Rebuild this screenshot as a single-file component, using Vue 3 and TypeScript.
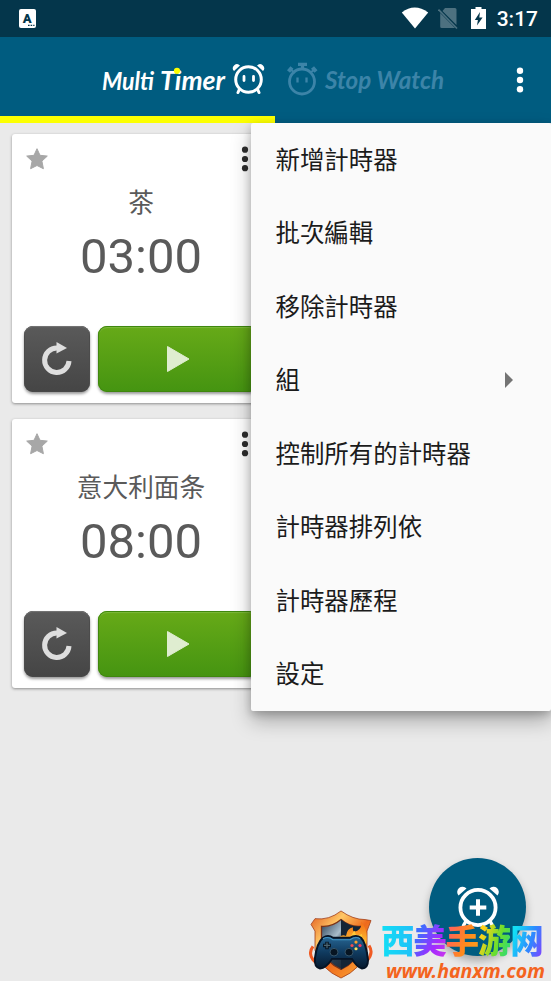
<script setup lang="ts">
interface Timer {
  name: string
  time: string
}
interface MenuItem {
  label: string
  submenu?: boolean
}

const timers: Timer[] = [
  { name: '茶', time: '03:00' },
  { name: '意大利面条', time: '08:00' },
]

const menu: MenuItem[] = [
  { label: '新增計時器' },
  { label: '批次編輯' },
  { label: '移除計時器' },
  { label: '組', submenu: true },
  { label: '控制所有的計時器' },
  { label: '計時器排列依' },
  { label: '計時器歷程' },
  { label: '設定' },
]
</script>

<template>
  <div class="screen">
    <header class="status">
      <svg class="ime" width="17" height="19" viewBox="0 0 17 19">
        <rect width="17" height="19" rx="2" fill="#fff" />
        <text x="8.3" y="13.500" text-anchor="middle" class="ime-letter">A</text>
        <path d="M9 16.3h1.6M11.6 16.3h1.6M14.2 16.3h1.3" stroke="#04364b" stroke-width="1.3" />
      </svg>
      <div class="status-right">
        <svg width="28" height="22" viewBox="0 0 28 22">
          <path d="M.8 5.4Q13.5-4.2 27.2 5.4L14 21.500Z" fill="#fff" />
        </svg>
        <svg class="sim" width="20" height="23" viewBox="0 0 20 23">
          <path d="M7 1h10a1.5 1.5 0 0 1 1.5 1.5V18L4.5 4Z M2.2 6 17 21H3.700a1.500 1.500 0 0 1-1.500-1.500Z" fill="#4d7180" />
          <path d="M.5 2.500 19 21.500" stroke="#4d7180" stroke-width="1.600" />
        </svg>
        <svg class="battery" width="15" height="22" viewBox="0 0 15 22">
          <path d="M4.500 0h6v2H15v20H0V2h4.500Z" fill="#fff" />
          <path d="M9 5 3.800 13h3.100L6 18.500 11.600 10.500H8.300Z" fill="#04364b" />
        </svg>
        <span class="clock">3:17</span>
      </div>
    </header>

    <nav class="tabs">
      <div class="tab tab-active">
        <svg width="164" height="40" viewBox="0 0 164 40">
          <g class="word" fill="#fff">
            <text x="1" y="30" font-size="24" textLength="52" lengthAdjust="spacingAndGlyphs">Multi</text>
            <text x="59" y="30" font-size="26.500" textLength="65" lengthAdjust="spacingAndGlyphs">Timer</text>
          </g>
          <circle cx="76" cy="10.800" r="3.100" fill="#fcff00" />
          <g fill="none" stroke="#fff" stroke-linecap="round">
            <circle cx="147.500" cy="19.500" r="12.800" stroke-width="3" />
            <path d="M143 16.500v4M152.500 16.500v4" stroke-width="2.800" />
            <path d="M138.300 29.500l-1.300 3M156.700 29.500l1.300 3" stroke-width="3" />
          </g>
          <path d="M133 11a4 4 0 0 1 6-5.500Z M162 11a4 4 0 0 0-6-5.500Z" fill="#fff" />
        </svg>
      </div>
      <div class="tab">
        <svg width="160" height="40" viewBox="0 0 160 40">
          <g fill="none" stroke="#3c84a8">
            <circle cx="15" cy="21.500" r="12.500" stroke-width="2.800" />
            <path d="M10.500 17.500v5M19.500 17.500v5" stroke-width="2.300" />
            <path d="M15.500 9V4M11 4.400h9" stroke-width="3.200" />
            <path d="M1.500 11.500 5 7.500M29 11.500 25.500 7.500" stroke-width="4" />
            <path d="M3 9 8 13M28 9 23 13" stroke-width="2" />
          </g>
          <text class="word" x="38" y="28.500" font-size="24.500" fill="#3c84a8" textLength="119" lengthAdjust="spacingAndGlyphs">Stop Watch</text>
        </svg>
      </div>
      <svg class="more" width="8" height="26" viewBox="0 0 8 26">
        <circle cx="4" cy="3.700" r="3.200" /><circle cx="4" cy="13" r="3.200" /><circle cx="4" cy="22.200" r="3.200" />
      </svg>
    </nav>

    <main class="list">
      <article v-for="t in timers" :key="t.name" class="card">
        <div class="card-top">
          <svg width="22" height="22" viewBox="0 0 22 22">
            <path d="M11 .7 14 7.300 21.300 8.100 15.900 13.100 17.400 20.700 11 17.500 4.600 20.700 6.100 13.100 .7 8.100 8 7.300Z" fill="#a7a7a7" stroke="#a7a7a7" stroke-linejoin="round" />
          </svg>
          <svg class="dots" width="8" height="26" viewBox="0 0 8 26">
            <circle cx="4" cy="3.700" r="3.100" /><circle cx="4" cy="13" r="3.100" /><circle cx="4" cy="22.200" r="3.100" />
          </svg>
        </div>
        <div class="name">{{ t.name }}</div>
        <div class="time">{{ t.time }}</div>
        <div class="actions">
          <button class="btn reset">
            <svg width="32" height="34" viewBox="0 0 32 34">
              <path d="M28 19A12.200 12.200 0 1 1 16 6" fill="none" stroke="#dedede" stroke-width="5" />
              <path d="M15.500 0 26 6 15.500 11.600Z" fill="#dedede" />
            </svg>
          </button>
          <button class="btn play">
            <svg width="24" height="28" viewBox="0 0 24 28">
              <path d="M1.500 1.500v25L23 14Z" fill="#dfedd0" stroke="#dfedd0" stroke-linejoin="round" />
            </svg>
          </button>
        </div>
      </article>
    </main>

    <button class="fab">
      <svg width="42" height="42" viewBox="0 0 42 42">
        <g fill="none" stroke="#fff" stroke-linecap="round">
          <circle cx="21" cy="21.500" r="17.600" stroke-width="3.800" />
          <path d="M8.500 36 6.500 39.500M33.500 36l2 3.500" stroke-width="3.500" />
        </g>
        <path d="M21 13.200v16.600M12.700 21.500h16.600" stroke="#fff" stroke-width="4" />
        <path d="M1.500 9.500a5.200 5.200 0 0 1 8-7Z M40.500 9.500a5.200 5.200 0 0 0-8-7Z" fill="#fff" />
      </svg>
    </button>

    <ul class="menu">
      <li v-for="m in menu" :key="m.label">
        <span>{{ m.label }}</span>
        <svg v-if="m.submenu" width="8" height="16" viewBox="0 0 8 16"><path d="M0 0 8 8 0 16Z" fill="#747474" /></svg>
      </li>
    </ul>

    <div class="badge">
      <svg width="64" height="69" viewBox="0 0 64 72" preserveAspectRatio="none">
        <defs>
          <linearGradient id="rim" x1="0" y1="0" x2="1" y2="1">
            <stop offset="0" stop-color="#e0561c" /><stop offset=".3" stop-color="#ffc766" />
            <stop offset=".55" stop-color="#ee6a1c" /><stop offset="1" stop-color="#ffb13a" />
          </linearGradient>
          <linearGradient id="plate" x1="0" y1="0" x2="1" y2="1">
            <stop offset="0" stop-color="#243a50" /><stop offset=".35" stop-color="#a9bdcb" />
            <stop offset=".5" stop-color="#2b3f52" /><stop offset="1" stop-color="#101c2a" />
          </linearGradient>
          <linearGradient id="flame" x1="0" y1="0" x2="0" y2="1">
            <stop offset="0" stop-color="#f36a12" /><stop offset="1" stop-color="#ffd53e" />
          </linearGradient>
          <linearGradient id="pad" x1="0" y1="0" x2="0" y2="1">
            <stop offset="0" stop-color="#286895" /><stop offset=".5" stop-color="#103b60" /><stop offset="1" stop-color="#06192e" />
          </linearGradient>
        </defs>
        <path d="M4 38Q-1 45 4 52L9 57M60 37Q65 45 58 53L54 57" fill="none" stroke="#f05a22" stroke-width="3" />
        <path d="M32 1Q20 11 6 9L2 15 6 22V42Q12 62 32 71 52 62 58 42V22L62 11 56 10Q44 10 32 1Z" fill="url(#rim)" stroke="#a03c18" stroke-width=".8" />
        <path d="M32 10Q23 18 12.500 17V40Q17 55 32 62 47 55 51.500 40V17Q41 18 32 10Z" fill="url(#plate)" stroke="#7a3218" stroke-width="1.300" />
        <path d="M32 10Q41 18 51.500 17V40Q47 55 32 62Z" fill="#152536" />
        <path d="M27 34Q31 24 37 27 38 19 44 18 43 24 48 22 54 18 52 12 61 23 56 40L26 38Z" fill="url(#flame)" />
        <path d="M35 35Q38 28 42 29 43 23 46 22 46 29 53 25L54 38Z" fill="#ffc939" />
        <path d="M14 29Q19 25 24 29H41Q47 25 52 29 57 34 59 52 59 61 53 61 48 60 43 51H23Q17 61 11 61 5 60 6 50 8 34 14 29Z" fill="url(#pad)" stroke="#061426" stroke-width="2" />
        <path d="M14 30Q19 27 24 31H41Q47 27 51 30" fill="none" stroke="#4293c4" stroke-width="1.200" />
        <path d="M18 33v8M14 37h8" stroke="#071725" stroke-width="3.600" />
        <path d="M18 34v6M15 37h6" stroke="#4b6370" stroke-width="1.300" />
        <circle cx="25" cy="44" r="4" fill="#071522" stroke="#37566b" />
        <circle cx="40" cy="44" r="4" fill="#071522" stroke="#37566b" />
        <circle cx="47" cy="33.500" r="1.600" fill="#ff9f29" /><circle cx="51" cy="37" r="1.600" fill="#ff395d" />
        <circle cx="43" cy="37" r="1.600" fill="#f04e50" /><circle cx="47" cy="40.500" r="1.600" fill="#ffe05c" />
      </svg>
      <div class="brand">
        <div class="brand-name"><span class="c1">西</span><span class="c2">美</span><span class="c3">手</span><span class="c4">游</span><span class="c5">网</span></div>
        <svg class="brand-url" width="162" height="21" viewBox="0 0 162 21">
          <text x="1" y="17" textLength="159" lengthAdjust="spacingAndGlyphs">www.hanxm.com</text>
        </svg>
      </div>
    </div>
  </div>
</template>

<style>
body {
  margin: 0;
  overflow: hidden;
}
</style>

<style scoped>
.screen {
  position: relative;
  width: 551px;
  height: 981px;
  overflow: hidden;
  background: #eaeaea;
  font-family: Roboto, 'Noto Sans CJK TC', sans-serif;
}
svg {
  display: block;
  flex: none;
}
.status {
  display: flex;
  justify-content: space-between;
  height: 37px;
  box-sizing: border-box;
  padding: 7px 13px 0 19px;
  background: #04364b;
}
.ime {
  margin-top: 2px;
}
.ime-letter {
  font: 900 13px Roboto, sans-serif;
  fill: #04364b;
}
.status-right {
  display: flex;
  align-items: flex-start;
}
.sim {
  margin-left: 9px;
}
.battery {
  margin-left: 13px;
}
.clock {
  margin-left: 11px;
  font-size: 21px;
  line-height: 25px;
  font-weight: 500;
  color: #fff;
}
.tabs {
  display: flex;
  height: 86px;
  background: #005c80;
}
.tab {
  width: 275px;
  box-sizing: border-box;
  padding: 23px 0 0 101px;
}
.tab-active {
  border-bottom: 7px solid #fcff00;
}
.tab + .tab {
  width: 241px;
  padding-left: 12px;
}
.word {
  font-family: Lato, sans-serif;
  font-weight: 700;
  font-style: italic;
}
.more {
  margin-top: 30px;
  fill: #fff;
}
.list {
  display: flex;
  flex-direction: column;
  gap: 16px;
  padding: 11px 12px;
}
.card {
  width: 258px;
  height: 269px;
  box-sizing: border-box;
  padding: 12px 12px 0;
  border-radius: 3px;
  background: #fff;
  box-shadow: 0 1px 3px rgba(0, 0, 0, 0.4);
}
.card-top {
  display: flex;
  justify-content: space-between;
  height: 38px;
  padding: 0 9px 0 2px;
}
.card-top svg:first-child {
  margin-top: 2px;
}
.dots {
  fill: #2d2d2d;
}
.name {
  height: 36px;
  line-height: 33px;
  text-align: center;
  font-family: 'Noto Sans CJK SC', sans-serif;
  font-size: 25.700px;
  color: #5a5a5a;
}
.time {
  height: 72px;
  line-height: 73px;
  text-align: center;
  font-size: 49px;
  color: #5a5a5a;
}
.actions {
  display: flex;
  gap: 8px;
  margin-top: 34px;
}
.btn {
  display: flex;
  align-items: center;
  justify-content: center;
  height: 66px;
  padding: 0;
  border: 0;
  border-radius: 9px;
}
.reset {
  width: 66px;
  background: linear-gradient(#5a5a5a, #454545);
  box-shadow: 0 2px 3px rgba(0, 0, 0, 0.4), inset 0 1px 1px #777, inset 0 0 0 1px #484848;
}
.play {
  width: 161px;
  background: linear-gradient(#67aa18, #459411);
  box-shadow: 0 2px 3px rgba(0, 0, 0, 0.4), inset 0 0 0 1px #3f870e, inset 0 2px 1px #7db83b;
}
.menu {
  position: absolute;
  top: 123px;
  left: 251px;
  width: 300px;
  height: 588px;
  margin: 0;
  padding: 0;
  list-style: none;
  border-radius: 2px;
  background: #fafafa;
  box-shadow: 0 10px 20px rgba(0, 0, 0, 0.28), 0 3px 8px rgba(0, 0, 0, 0.2);
}
.menu li {
  display: flex;
  align-items: center;
  justify-content: space-between;
  height: 73.500px;
  padding: 0 38px 0 24.500px;
  font-size: 24.450px;
  color: #1b1b1b;
}
.menu li span {
  padding-bottom: 3px;
}
.fab {
  position: absolute;
  left: 429px;
  top: 858px;
  display: flex;
  align-items: center;
  justify-content: center;
  width: 97px;
  height: 98px;
  padding: 0;
  border: 0;
  border-radius: 50%;
  background: #005c80;
  box-shadow: 0 5px 9px rgba(0, 0, 0, 0.28);
}
.badge {
  position: absolute;
  left: 309px;
  top: 910px;
  display: flex;
  gap: 8px;
}
.brand {
  padding-top: 8px;
}
.brand-name {
  display: flex;
  height: 44px;
  line-height: 42px;
  font-family: 'Noto Sans CJK SC', sans-serif;
  font-weight: 900;
  font-size: 33.500px;
}
.brand-name span {
  width: 32.300px;
  color: transparent;
  white-space: nowrap;
  background-clip: text;
  -webkit-background-clip: text;
}
.brand-name .c1 {
  background-image: linear-gradient(90deg, #12dff5, #20c0f8);
}
.brand-name .c2 {
  background-image: linear-gradient(120deg, #3f6bff 25%, #a32bff 65%, #d338e8);
}
.brand-name .c3 {
  background-image: linear-gradient(110deg, #ff5570, #ff8a1c 60%, #ffa21c);
}
.brand-name .c4 {
  background-image: linear-gradient(110deg, #ffd21a 20%, #6bdf2c 60%, #1cd98c);
}
.brand-name .c5 {
  background-image: linear-gradient(110deg, #12dff5 20%, #2c8bff 60%, #8a3bff);
}
.brand-url {
  margin: -1px 0 0 4px;
  font: italic 700 19px/1 'Noto Sans', sans-serif;
  fill: #f4641e;
}
</style>
